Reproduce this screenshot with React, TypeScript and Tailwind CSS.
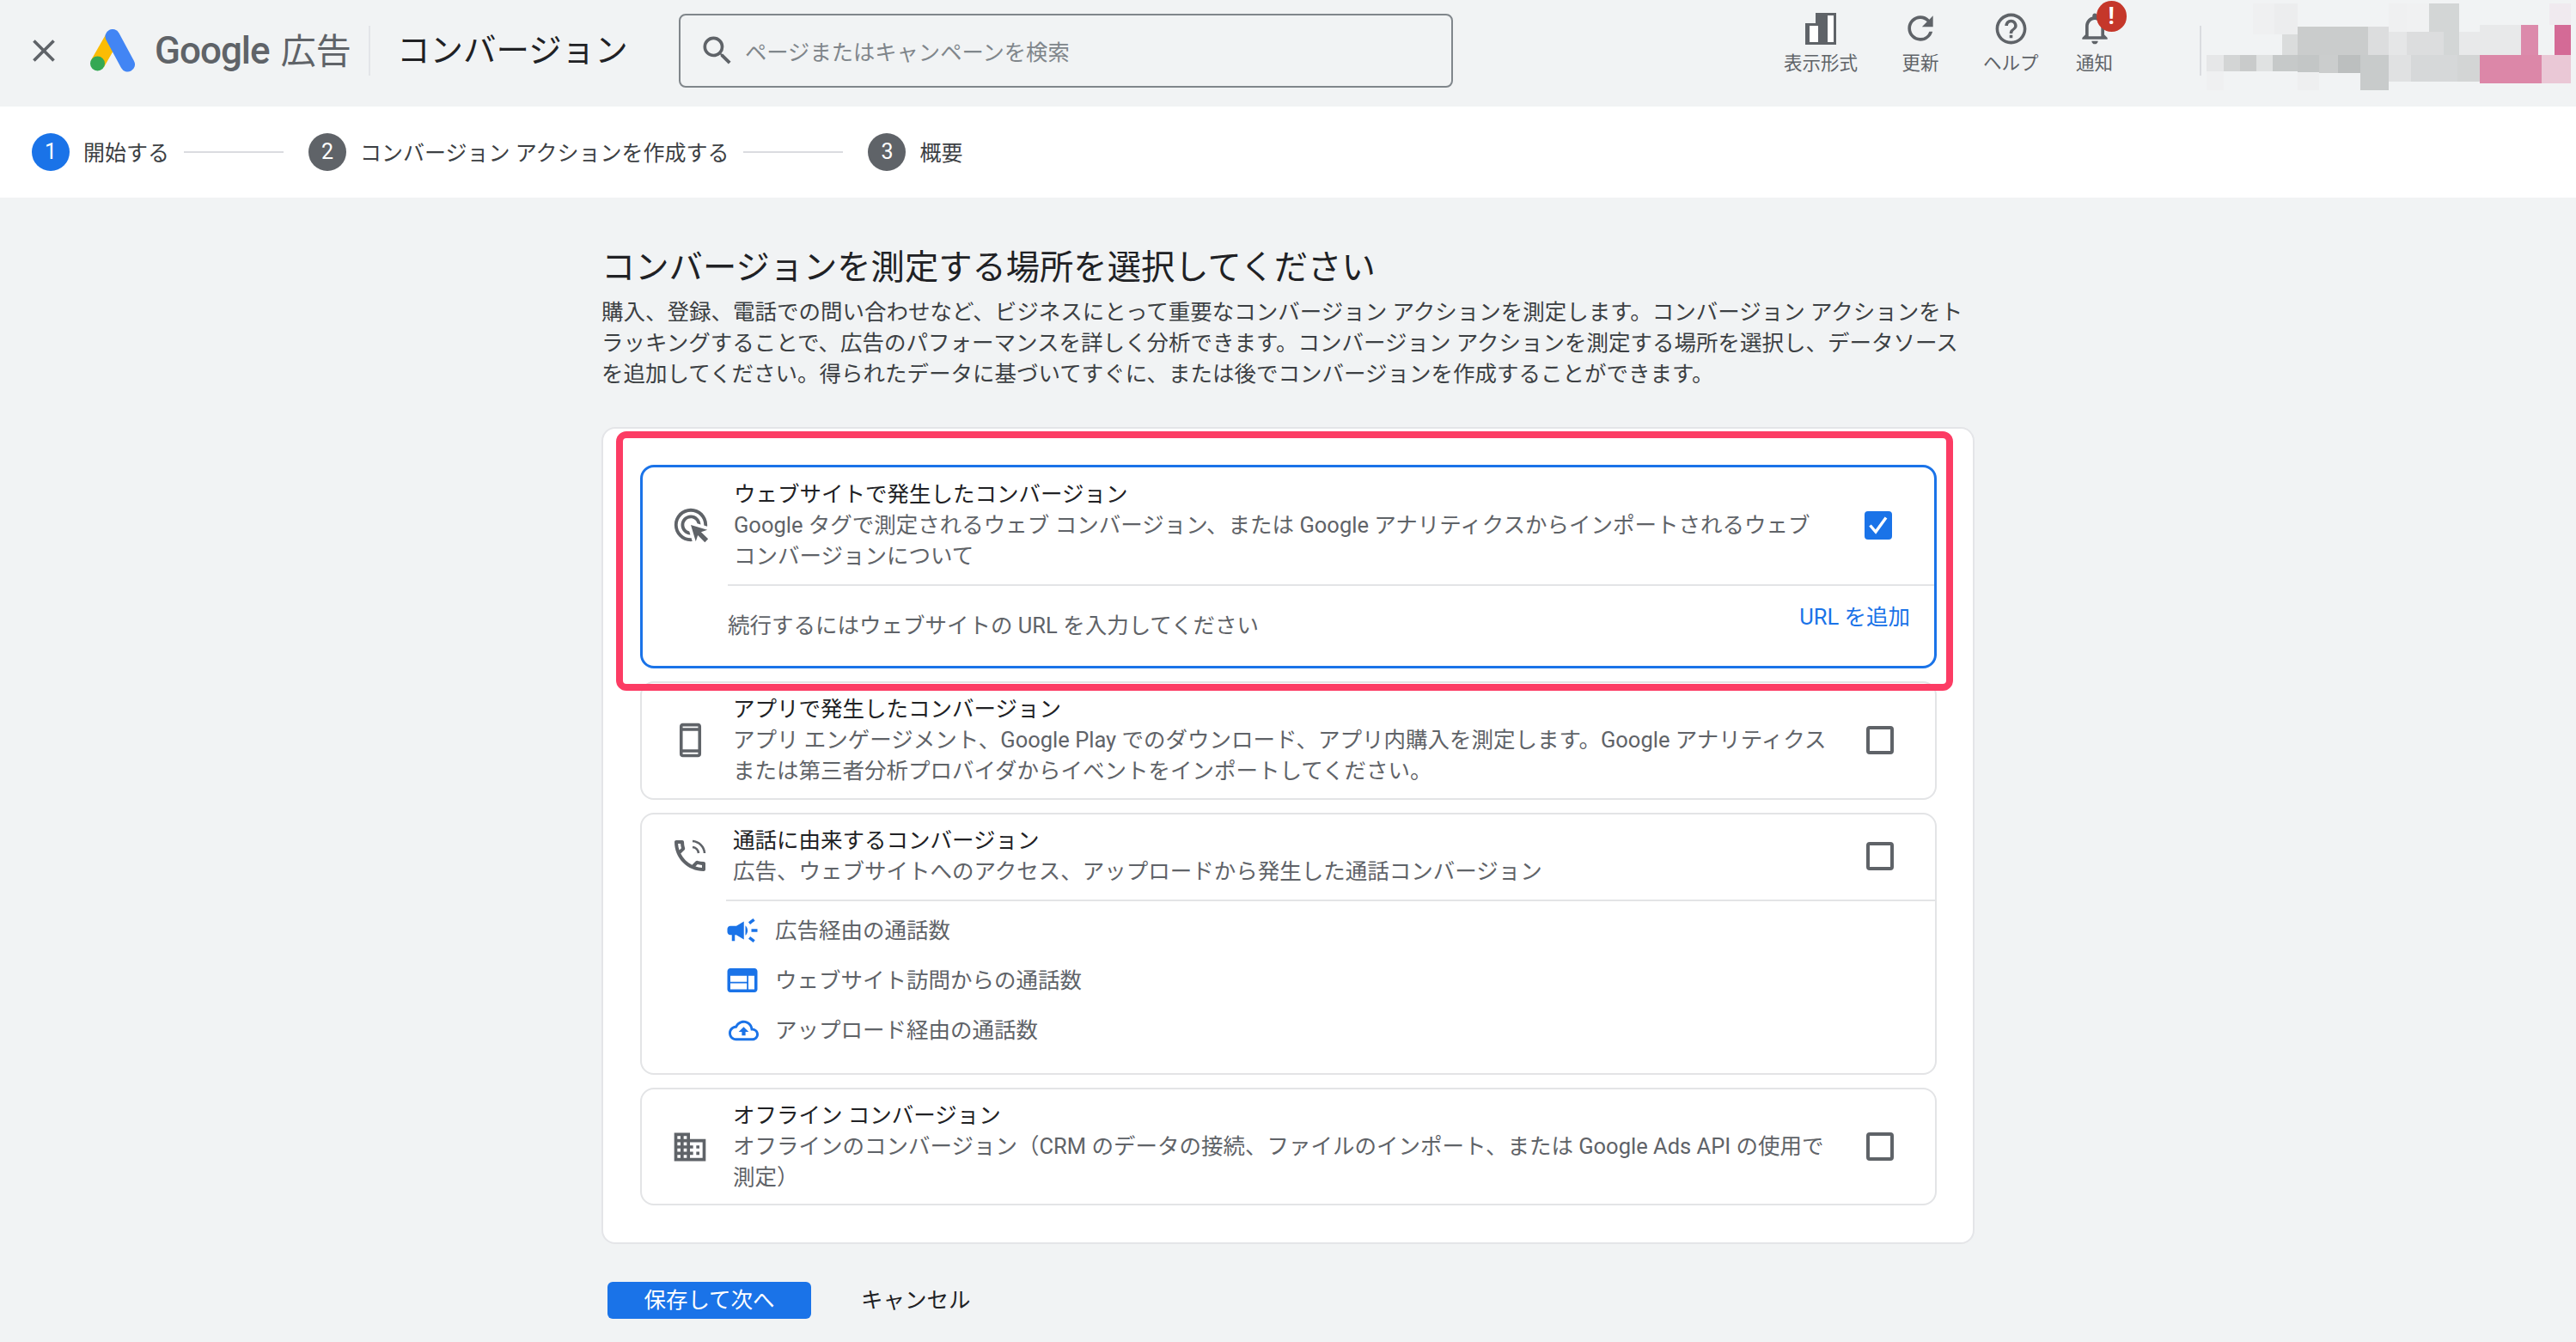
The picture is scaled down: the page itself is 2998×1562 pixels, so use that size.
import React from 'react';

const FONT = 'font-["Roboto","Noto_Sans_CJK_JP",sans-serif]';

// blurred account area, in a 634x372 box
const mosaic: Array<[number, number, number, number, string]> = [
  [1005, 12, 38, 108, '#eff0f1'],
  [1043, 12, 40, 108, '#ecedee'],
  [1083, 93, 123, 99, '#cacccc'],
  [1056, 120, 27, 72, '#dadcdc'],
  [1206, 93, 36, 99, '#dcddde'],
  [1242, 12, 32, 98, '#eff0f1'],
  [1274, 12, 38, 98, '#f0f1f2'],
  [1312, 12, 53, 98, '#d3d6d6'],
  [1242, 110, 32, 82, '#e5e6e7'],
  [1274, 110, 64, 82, '#dcddde'],
  [1338, 110, 27, 82, '#d3d6d6'],
  [1365, 110, 35, 82, '#e8e9ea'],
  [1400, 87, 72, 105, '#e8e9ea'],
  [1472, 87, 30, 105, '#dc8aab'],
  [1531, 87, 28, 105, '#d46a96'],
  [1522, 12, 37, 75, '#f0eaef'],
  [925, 192, 30, 58, '#e6e7e8'],
  [955, 192, 28, 58, '#d3d5d5'],
  [983, 192, 28, 58, '#c9cbcb'],
  [1011, 192, 29, 58, '#e0e2e2'],
  [1040, 192, 43, 58, '#c6c9c9'],
  [1083, 192, 38, 60, '#c3c6c6'],
  [1121, 192, 33, 63, '#cbcdcd'],
  [1154, 192, 38, 63, '#bcbfbf'],
  [1192, 192, 50, 123, '#c8cbcb'],
  [1242, 192, 39, 93, '#e0e1e2'],
  [1281, 192, 80, 93, '#d6d8d9'],
  [1361, 192, 39, 93, '#d3d5d5'],
  [1400, 192, 108, 99, '#dc87a8'],
  [1508, 192, 51, 99, '#eac8d6'],
  [925, 250, 30, 65, '#eff0f1'],
  [1083, 252, 38, 63, '#eeeff0'],
];

function Icon({ d, size, color = '#5f6368' }: { d: string; size: number; color?: string }) {
  return (
    <svg width={size} height={size} viewBox="0 0 24 24" fill={color} className="shrink-0">
      <path d={d} />
    </svg>
  );
}

function Checkbox({ checked }: { checked?: boolean }) {
  if (checked) {
    return (
      <div className="w-[32px] h-[33px] rounded-[4px] bg-[#1a73e8] flex items-center justify-center shrink-0">
        <svg width="24" height="24" viewBox="0 0 24 24" fill="none" stroke="#fff" strokeWidth="3.4">
          <path d="M2.5 12.5l6.5 7.5L21 3.5" />
        </svg>
      </div>
    );
  }
  return <div className="w-[32px] h-[33px] rounded-[4px] border-[4px] border-[#5f6368] shrink-0" />;
}

function OptionRow({
  icon,
  title,
  desc,
  checked,
  className,
}: {
  icon: React.ReactNode;
  title: string;
  desc: string;
  checked?: boolean;
  className: string;
}) {
  return (
    <div className={`flex items-center pl-[12px] ${className}`}>
      <div className="w-[88px] flex justify-center shrink-0">{icon}</div>
      <div className="ml-[6px] w-[1280px] shrink-0">
        <div className="text-[#202124] leading-[35px]">{title}</div>
        <div className="text-[#5f6368] leading-[36px]">{desc}</div>
      </div>
      <div className="ml-auto">
        <Checkbox checked={checked} />
      </div>
    </div>
  );
}

function Step({ n, label, active, line }: { n: number; label: string; active?: boolean; line?: boolean }) {
  return (
    <div className="flex items-center">
      <div
        className={`w-[44px] h-[44px] rounded-full flex items-center justify-center text-white text-[25px] ${
          active ? 'bg-[#1a73e8]' : 'bg-[#5f6368]'
        }`}
      >
        {n}
      </div>
      <span className="ml-[16px] pt-[3px] text-[#3c4043] text-[25px]">{label}</span>
      {line && <div className="ml-[17px] mr-[29px] w-[116px] h-[2px] bg-[#dadce0]" />}
    </div>
  );
}

function HeaderAction({ icon, label }: { icon: React.ReactNode; label: string }) {
  return (
    <div className="flex flex-col items-center">
      <div className="relative h-[44px] flex items-center justify-center">{icon}</div>
      <span className="mt-[7px] text-[21.5px] leading-[24px] text-[#5f6368]">{label}</span>
    </div>
  );
}

export default function App() {
  return (
    <div className={`h-[1562px] overflow-hidden bg-[#f1f3f4] text-[25.5px] ${FONT}`}>
      {/* top bar */}
      <header className="h-[124px] flex items-center pb-[7px] pl-[29px]">
        <Icon size={44} d="M19 6.41 17.59 5 12 10.59 6.41 5 5 6.41 10.59 12 5 17.59 6.41 19 12 13.41 17.59 19 19 17.59 13.41 12z" />
        <svg width="52" height="50" viewBox="0 0 52 50" className="ml-[32px] shrink-0">
          <path d="M26 9.5L8.5 40" stroke="#fbbc04" strokeWidth="17" fill="none" />
          <path d="M26 8.5L43.5 41" stroke="#4285f4" strokeWidth="17" strokeLinecap="round" fill="none" />
          <circle cx="8.5" cy="40" r="8.5" fill="#34a853" />
        </svg>
        <div className="ml-[23px] w-[225px] shrink-0 whitespace-nowrap text-[#5f6368]">
          <span className="text-[44px] font-medium tracking-[-1px]">Google</span>
          <span className="ml-[13px] text-[41px]">広告</span>
        </div>
        <div className="ml-[24px] w-[2px] h-[58px] bg-[#e3e5e8]" />
        <div className="ml-[31px] w-[269px] shrink-0 whitespace-nowrap text-[38.5px] text-[#202124]">コンバージョン</div>
        <div className="ml-[59px] w-[901px] h-[86px] shrink-0 rounded-[8px] border-2 border-[#80868b] flex items-center pl-[21px]">
          <Icon
            size={44}
            d="M15.5 14h-.79l-.28-.27A6.471 6.471 0 0 0 16 9.5 6.5 6.5 0 1 0 9.5 16c1.61 0 3.09-.59 4.23-1.57l.27.28v.79l5 4.99L20.49 19l-4.99-5zm-6 0C7.01 14 5 11.99 5 9.5S7.01 5 9.5 5 14 7.01 14 9.5 11.99 14 9.5 14z"
          />
          <span className="ml-[10px] pt-[6px] text-[#80868b] text-[25.3px]">ページまたはキャンペーンを検索</span>
        </div>
        <div className="ml-[385px] self-start pt-[11px] flex shrink-0">
          <HeaderAction
            label="表示形式"
            icon={
              <svg width="36" height="37" viewBox="0 0 36 37">
                <path d="M12 0h24v37H0V12h12z" fill="#5f6368" />
                <rect x="5" y="15" width="10" height="19" fill="#fff" />
                <rect x="26" y="3" width="7" height="31" fill="#fff" />
              </svg>
            }
          />
          <div className="ml-[51px]">
            <HeaderAction
              label="更新"
              icon={
                <Icon
                  size={44}
                  d="M17.65 6.35A7.958 7.958 0 0 0 12 4c-4.42 0-7.99 3.58-7.99 8s3.57 8 7.99 8c3.73 0 6.84-2.55 7.73-6h-2.08A5.99 5.99 0 0 1 12 18c-3.31 0-6-2.69-6-6s2.69-6 6-6c1.66 0 3.14.69 4.22 1.78L13 11h7V4l-2.35 2.35z"
                />
              }
            />
          </div>
          <div className="ml-[51px]">
            <HeaderAction
              label="ヘルプ"
              icon={
                <Icon
                  size={43}
                  d="M11 18h2v-2h-2v2zm1-16C6.48 2 2 6.48 2 12s4.48 10 10 10 10-4.48 10-10S17.52 2 12 2zm0 18c-4.41 0-8-3.59-8-8s3.59-8 8-8 8 3.59 8 8-3.59 8-8 8zm0-14c-2.21 0-4 1.79-4 4h2c0-1.1.9-2 2-2s2 .9 2 2c0 2-3 1.75-3 5h2c0-2.25 3-2.5 3-5 0-2.21-1.79-4-4-4z"
                />
              }
            />
          </div>
          <div className="ml-[43px]">
            <HeaderAction
              label="通知"
              icon={
                <>
                  <Icon
                    size={44}
                    d="M12 22c1.1 0 2-.9 2-2h-4c0 1.1.9 2 2 2zm6-6v-5c0-3.07-1.63-5.64-4.5-6.32V4c0-.83-.67-1.5-1.5-1.5s-1.5.67-1.5 1.5v.68C7.64 5.36 6 7.92 6 11v5l-2 2v1h16v-1l-2-2zm-2 1H8v-6c0-2.48 1.51-4.5 4-4.5s4 2.02 4 4.5v6z"
                  />
                  <div className="absolute left-[24px] top-[-10px] w-[35px] h-[36px] rounded-full bg-[#c5372a] flex items-center justify-center text-white text-[27px] font-bold">
                    !
                  </div>
                </>
              }
            />
          </div>
        </div>
        <div className="ml-[100px] w-[2px] h-[58px] bg-[#dadce0] shrink-0" />
        <svg
          viewBox="925 0 634 372"
          preserveAspectRatio="none"
          shapeRendering="crispEdges"
          className="ml-[6px] w-[424px] h-[124px] self-start shrink-0"
        >
          {mosaic.map(([x, y, w, h, c], i) => (
            <rect key={i} x={x} y={y} width={w} height={h} fill={c} />
          ))}
        </svg>
      </header>

      {/* stepper */}
      <div className="h-[106px] bg-white flex items-center pl-[37px]">
        <Step n={1} label="開始する" active line />
        <Step n={2} label="コンバージョン アクションを作成する" line />
        <Step n={3} label="概要" />
      </div>

      <main className="w-[1598px] ml-[700px]">
        <h1 className="pt-[57px] text-[39.3px] leading-[50px] text-[#202124]">
          コンバージョンを測定する場所を選択してください
        </h1>
        <p className="mt-[8px] w-[1590px] leading-[36px] text-[#3c4043]">
          購入、登録、電話での問い合わせなど、ビジネスにとって重要なコンバージョン アクションを測定します。コンバージョン アクションをトラッキングすることで、広告のパフォーマンスを詳しく分析できます。コンバージョン アクションを測定する場所を選択し、データソースを追加してください。得られたデータに基づいてすぐに、または後でコンバージョンを作成することができます。
        </p>

        <section className="relative mt-[44px] h-[951px] bg-white rounded-[16px] border-2 border-[#e4e5e8] pt-[42px] pl-[43px] pr-[42px] flex flex-col gap-[15px]">
          {/* website */}
          <div className="h-[237px] rounded-[16px] border-[3px] border-[#1a73e8] shrink-0">
            <OptionRow
              className="h-[136px] pb-[2px] pr-[49px]"
              checked
              title="ウェブサイトで発生したコンバージョン"
              desc="Google タグで測定されるウェブ コンバージョン、または Google アナリティクスからインポートされるウェブ コンバージョンについて"
              icon={
                <Icon
                  size={46}
                  d="M11.71 17.99A5.993 5.993 0 0 1 6 12c0-3.31 2.69-6 6-6 3.22 0 5.84 2.53 5.99 5.71l-2.1-.63C15.48 9.31 13.89 8 12 8c-2.21 0-4 1.79-4 4 0 1.89 1.31 3.48 3.08 3.89l.63 2.1zM22 12c0 .3-.01.6-.04.9l-1.97-.59c.01-.1.01-.21.01-.31 0-4.42-3.58-8-8-8s-8 3.58-8 8 3.58 8 8 8c.1 0 .21 0 .31-.01l.59 1.97c-.3.03-.6.04-.9.04-5.52 0-10-4.48-10-10S6.48 2 12 2s10 4.48 10 10zm-3.77 4.26L22 15l-10-3 3 10 1.26-3.77 4.27 4.27 1.98-1.98-4.28-4.26z"
                />
              }
            />
            <div className="ml-[99px] h-[95px] border-t-2 border-[#e3e4e6] flex justify-between pr-[28px]">
              <span className="mt-[28px] text-[#5f6368] leading-[36px]">続行するにはウェブサイトの URL を入力してください</span>
              <span className="mt-[18px] text-[#1a73e8] leading-[36px]">URL を追加</span>
            </div>
          </div>

          {/* app */}
          <div className="h-[138px] rounded-[16px] border-2 border-[#e3e4e6] shrink-0">
            <OptionRow
              className="h-[132px] pr-[48px]"
              title="アプリで発生したコンバージョン"
              desc="アプリ エンゲージメント、Google Play でのダウンロード、アプリ内購入を測定します。Google アナリティクス または第三者分析プロバイダからイベントをインポートしてください。"
              icon={
                <Icon
                  size={43}
                  d="M17 1.01 7 1c-1.1 0-2 .9-2 2v18c0 1.1.9 2 2 2h10c1.1 0 2-.9 2-2V3c0-1.1-.9-1.99-2-1.99zM17 21H7v-1h10v1zm0-3H7V6h10v12zM17 4H7V3h10v1z"
                />
              }
            />
          </div>

          {/* calls */}
          <div className="h-[305px] rounded-[16px] border-2 border-[#e3e4e6] shrink-0">
            <OptionRow
              className="h-[96px] pr-[48px]"
              title="通話に由来するコンバージョン"
              desc="広告、ウェブサイトへのアクセス、アップロードから発生した通話コンバージョン"
              icon={
                <svg width="48" height="48" viewBox="0 0 24 24" fill="#5f6368" className="shrink-0">
                  <path d="M6.54 5c.06.89.21 1.76.45 2.59l-1.2 1.2c-.41-1.2-.67-2.47-.76-3.79h1.51m9.86 12.02c.85.24 1.72.39 2.6.45v1.49c-1.32-.09-2.59-.35-3.8-.75l1.2-1.19M7.5 3H4c-.55 0-1 .45-1 1 0 9.39 7.61 17 17 17 .55 0 1-.45 1-1v-3.49c0-.55-.45-1-1-1-1.24 0-2.45-.2-3.57-.57-.1-.04-.21-.05-.31-.05-.26 0-.51.1-.71.29l-2.2 2.2c-2.83-1.45-5.15-3.76-6.59-6.59l2.2-2.2c.28-.28.36-.67.25-1.02C8.7 6.45 8.5 5.25 8.5 4c0-.55-.45-1-1-1z" />
                  <path d="M13.5 3.5a7.5 7.5 0 0 1 7 7" fill="none" stroke="#5f6368" strokeWidth="1.3" />
                  <path d="M13.5 7a4 4 0 0 1 3.5 3.5" fill="none" stroke="#5f6368" strokeWidth="1.3" />
                </svg>
              }
            />
            <div className="mt-[3px] ml-[98px] border-t-2 border-[#e3e4e6] pt-[16px] flex flex-col gap-[22px]">
              <div className="flex items-center h-[36px] text-[#5f6368]">
                <div className="w-[59px] flex shrink-0 -ml-[2px]">
                  <Icon
                    size={42}
                    color="#1a73e8"
                    d="M18 11v2h4v-2h-4zm-2 6.61c.96.71 2.21 1.65 3.2 2.39.4-.53.8-1.07 1.2-1.6-.99-.74-2.24-1.68-3.2-2.4-.4.54-.8 1.08-1.2 1.61zM20.4 5.6c-.4-.53-.8-1.07-1.2-1.6-.99.74-2.24 1.68-3.2 2.4.4.53.8 1.07 1.2 1.6.96-.72 2.21-1.65 3.2-2.4zM4 9c-1.1 0-2 .9-2 2v2c0 1.1.9 2 2 2h1v4h2v-4h1l5 3V6L8 9H4zm11.5 3c0-1.33-.58-2.53-1.5-3.35v6.69c.92-.81 1.5-2.01 1.5-3.34z"
                  />
                </div>
                広告経由の通話数
              </div>
              <div className="flex items-center h-[36px] text-[#5f6368]">
                <div className="w-[59px] flex shrink-0 -ml-[2px]">
                  <Icon
                    size={42}
                    color="#1a73e8"
                    d="M20 4H4c-1.1 0-1.99.9-1.99 2L2 18c0 1.1.9 2 2 2h16c1.1 0 2-.9 2-2V6c0-1.1-.9-2-2-2zm-5 14H4v-4h11v4zm0-5H4V9h11v4zm5 5h-4V9h4v9z"
                  />
                </div>
                ウェブサイト訪問からの通話数
              </div>
              <div className="flex items-center h-[36px] text-[#5f6368]">
                <div className="w-[54px] flex shrink-0 ml-[3px]">
                  <Icon
                    size={35}
                    color="#1a73e8"
                    d="M19.35 10.04C18.67 6.59 15.64 4 12 4 9.11 4 6.6 5.64 5.35 8.04 2.34 8.36 0 10.91 0 14c0 3.31 2.69 6 6 6h13c2.76 0 5-2.24 5-5 0-2.64-2.05-4.78-4.65-4.96zM19 18H6c-2.21 0-4-1.79-4-4 0-2.05 1.53-3.76 3.56-3.97l1.07-.11.5-.95C8.08 7.14 9.94 6 12 6c2.62 0 4.88 1.86 5.39 4.43l.3 1.5 1.53.11c1.56.1 2.78 1.41 2.78 2.96 0 1.65-1.35 3-3 3zM8 13h2.55v3h2.9v-3H16l-4-4z"
                  />
                </div>
                アップロード経由の通話数
              </div>
            </div>
          </div>

          {/* offline */}
          <div className="h-[137px] rounded-[16px] border-2 border-[#e3e4e6] shrink-0">
            <OptionRow
              className="h-full pr-[48px]"
              title="オフライン コンバージョン"
              desc="オフラインのコンバージョン（CRM のデータの接続、ファイルのインポート、または Google Ads API の使用で 測定）"
              icon={
                <Icon
                  size={44}
                  d="M12 7V3H2v18h20V7H12zM6 19H4v-2h2v2zm0-4H4v-2h2v2zm0-4H4V9h2v2zm0-4H4V5h2v2zm4 12H8v-2h2v2zm0-4H8v-2h2v2zm0-4H8V9h2v2zm0-4H8V5h2v2zm10 12h-8v-2h2v-2h-2v-2h2v-2h-2V9h8v10zm-2-8h-2v2h2v-2zm0 4h-2v2h2v-2z"
                />
              }
            />
          </div>

          {/* annotation frame */}
          <div className="absolute left-[15px] top-[3px] w-[1556px] h-[302px] rounded-[12px] border-[8px] border-[#fc3c64]" />
        </section>

        <div className="mt-[44px] ml-[7px] flex items-center">
          <button className="w-[237px] h-[43px] rounded-[6px] bg-[#1a73e8] text-white text-[25.5px]">保存して次へ</button>
          <button className="ml-[58px] text-[#202124] text-[25.5px]">キャンセル</button>
        </div>
      </main>
    </div>
  );
}
